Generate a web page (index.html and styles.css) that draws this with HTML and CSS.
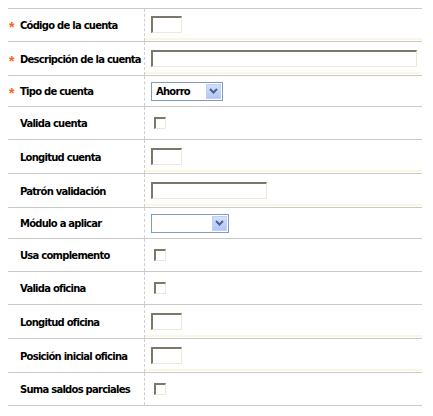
FILE: index.html
```html
<!DOCTYPE html>
<html lang="es">
<head>
<meta charset="utf-8">
<link rel="stylesheet" href="styles.css">
</head>
<body>
<div class="form">
  <div class="row row-text">
    <div class="label"><span class="req">*</span><span class="text">Código de la cuenta</span></div>
    <div class="field"><span class="input w30"></span></div>
  </div>
  <div class="row row-text">
    <div class="label"><span class="req">*</span><span class="text">Descripción de la cuenta</span></div>
    <div class="field"><span class="input w266"></span></div>
  </div>
  <div class="row row-select">
    <div class="label"><span class="req">*</span><span class="text">Tipo de cuenta</span></div>
    <div class="field"><span class="select w72"><span class="sel-text">Ahorro</span><span class="sel-btn"><svg width="9" height="6" viewBox="0 0 9 6"><path d="M1 1 L4.5 4.5 L8 1" fill="none" stroke="#4d6185" stroke-width="2"/></svg></span></span></div>
  </div>
  <div class="row row-check">
    <div class="label"><span class="req"></span><span class="text">Valida cuenta</span></div>
    <div class="field"><span class="check"></span></div>
  </div>
  <div class="row row-text">
    <div class="label"><span class="req"></span><span class="text">Longitud cuenta</span></div>
    <div class="field"><span class="input w30"></span></div>
  </div>
  <div class="row row-text">
    <div class="label"><span class="req"></span><span class="text">Patrón validación</span></div>
    <div class="field"><span class="input w116"></span></div>
  </div>
  <div class="row row-select">
    <div class="label"><span class="req"></span><span class="text">Módulo a aplicar</span></div>
    <div class="field"><span class="select w78"><span class="sel-text"></span><span class="sel-btn"><svg width="9" height="6" viewBox="0 0 9 6"><path d="M1 1 L4.5 4.5 L8 1" fill="none" stroke="#4d6185" stroke-width="2"/></svg></span></span></div>
  </div>
  <div class="row row-check">
    <div class="label"><span class="req"></span><span class="text">Usa complemento</span></div>
    <div class="field"><span class="check"></span></div>
  </div>
  <div class="row row-check">
    <div class="label"><span class="req"></span><span class="text">Valida oficina</span></div>
    <div class="field"><span class="check"></span></div>
  </div>
  <div class="row row-text">
    <div class="label"><span class="req"></span><span class="text">Longitud oficina</span></div>
    <div class="field"><span class="input w30"></span></div>
  </div>
  <div class="row row-text">
    <div class="label"><span class="req"></span><span class="text">Posición inicial oficina</span></div>
    <div class="field"><span class="input w30"></span></div>
  </div>
  <div class="row row-check">
    <div class="label"><span class="req"></span><span class="text">Suma saldos parciales</span></div>
    <div class="field"><span class="check"></span></div>
  </div>
</div>
</body>
</html>
```

FILE: styles.css
```css
html, body {
  margin: 0;
  padding: 0;
  background: #ffffff;
}
body {
  font-family: "DejaVu Sans", Verdana, sans-serif;
  font-size: 10px;
  font-weight: bold;
  color: #000;
}
.form {
  margin: 8px 0 0 8px;
  width: 414px;
  border-top: 1px solid #c9c9c9;
}
.row {
  display: flex;
  box-sizing: border-box;
  border-bottom: 1px solid #c9c9c9;
}
.row-text { height: 34px; }
.row-select { height: 31px; }
.row-check { height: 33px; }
.form .row:first-child { height: 33px; }
.label {
  width: 137px;
  flex: none;
  display: flex;
  align-items: center;
  border-right: 1px dashed #cfcfcf;
  box-sizing: border-box;
  white-space: nowrap;
}
.text {
  letter-spacing: -0.75px;
  padding-top: 1px;
}
.sel-text {
  letter-spacing: -0.75px;
}
.req {
  width: 11px;
  padding-left: 1px;
  flex: none;
  color: #f26522;
  font-family: "Liberation Sans", Arial, sans-serif;
  font-size: 14px;
  line-height: 1;
  position: relative;
  top: 2px;
}
.field {
  flex: 1;
  display: flex;
  align-items: center;
  padding-left: 6px;
}
.row-text .field {
  background: linear-gradient(to top, #ffffff 0 1px, #fbf6e2 1px 3px, transparent 3px);
}
.input {
  display: block;
  box-sizing: border-box;
  height: 17px;
  background: #fff;
  border-top: 2px solid #7b786b;
  border-left: 2px solid #7b786b;
  border-right: 1px solid #ece9d6;
  border-bottom: 1px solid #ece9d6;
  margin-top: -1px;
}
.w30 { width: 31px; }
.w266 { width: 266px; }
.w116 { width: 116px; }
.w72 { width: 72px; }
.w78 { width: 78px; }
.select {
  display: flex;
  box-sizing: border-box;
  height: 19px;
  border: 1px solid #7f9db9;
  background: #fff;
  align-items: stretch;
}
.sel-text {
  flex: 1;
  padding-left: 4px;
  line-height: 17px;
}
.sel-btn {
  width: 15px;
  margin: 1px;
  box-sizing: border-box;
  border: 1px solid #bdd0fb;
  background: linear-gradient(to bottom, #d2e0fd, #b1c6f6);
  display: flex;
  align-items: center;
  justify-content: center;
}
.check {
  display: block;
  box-sizing: border-box;
  width: 12px;
  height: 12px;
  margin-left: 3px;
  background: #fff;
  border-top: 2px solid #7b786b;
  border-left: 2px solid #7b786b;
  border-right: 1px solid #ece9d6;
  border-bottom: 1px solid #ece9d6;
}
```
